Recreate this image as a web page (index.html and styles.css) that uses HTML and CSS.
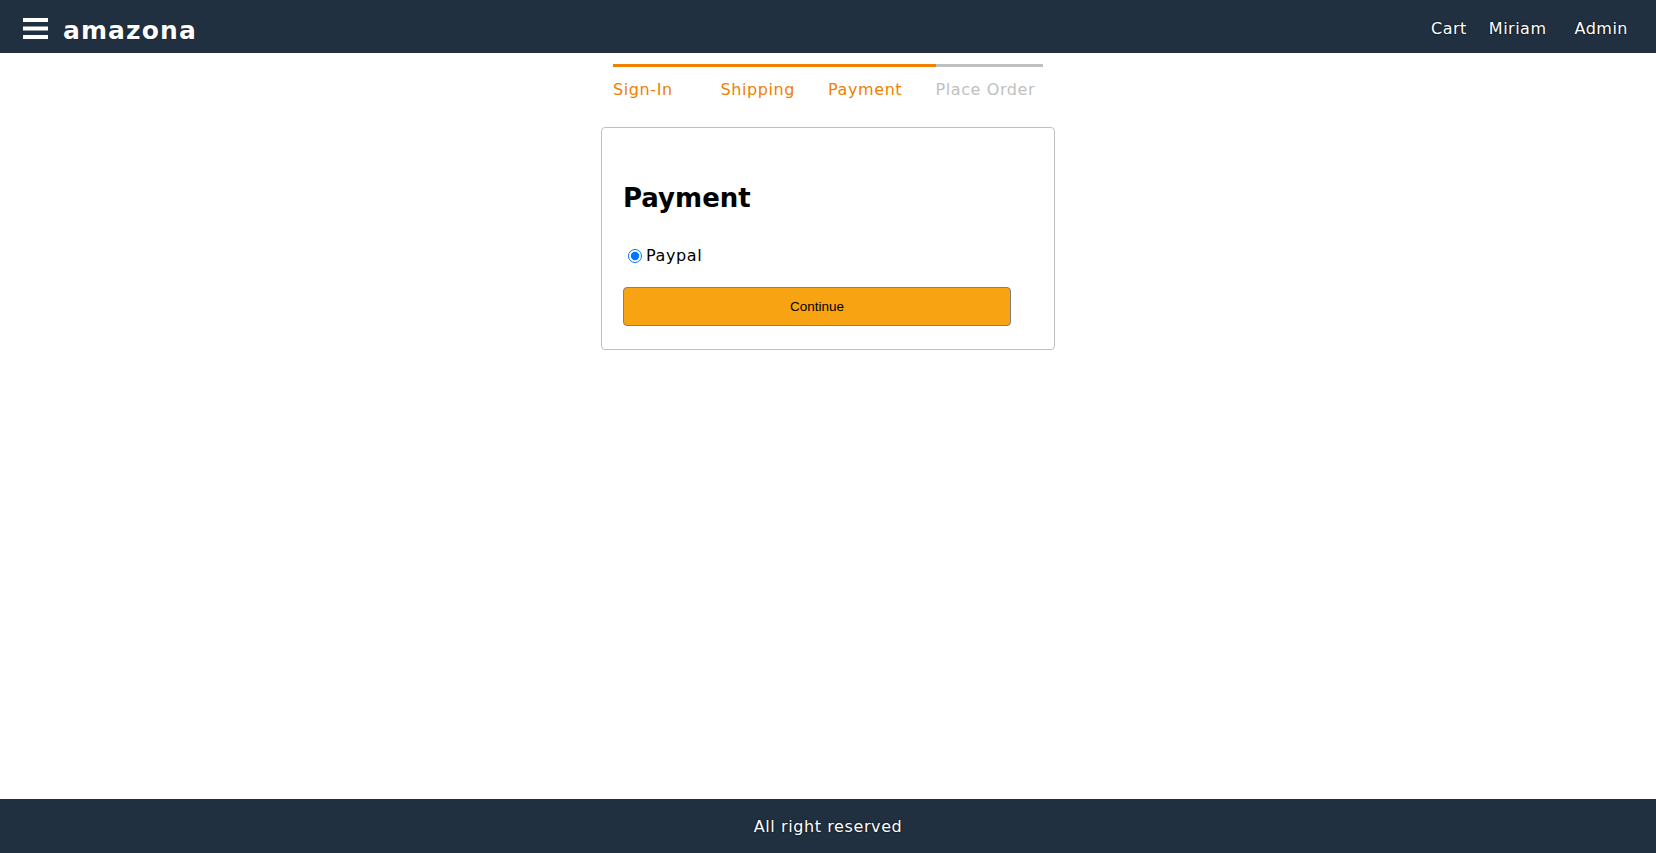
FILE: index.html
```html
<!DOCTYPE html>
<html>
<head>
<meta charset="utf-8">
<link rel="stylesheet" href="styles.css">
</head>
<body>
<div class="page">
  <header class="topbar">
    <div class="brand">
      <button class="menu-btn" aria-label="menu">
        <svg width="25" height="21" viewBox="0 0 25 21"><rect x="0" y="0" width="25" height="4" fill="#fff"/><rect x="0" y="8.5" width="25" height="4" fill="#fff"/><rect x="0" y="17" width="25" height="4" fill="#fff"/></svg>
      </button>
      <a class="logo" href="#">amazona</a>
    </div>
    <nav class="nav">
      <a class="nav-link" href="#">Cart</a>
      <a class="nav-link" href="#">Miriam</a>
      <a class="nav-link nav-admin" href="#">Admin</a>
    </nav>
  </header>
  <main class="main">
    <div class="steps">
      <div class="step active">Sign-In</div>
      <div class="step active">Shipping</div>
      <div class="step active">Payment</div>
      <div class="step">Place Order</div>
    </div>
    <div class="card">
      <form class="form">
        <h1 class="title">Payment</h1>
        <label class="option"><input type="radio" name="pm" checked><span>Paypal</span></label>
        <button type="button" class="primary">Continue</button>
      </form>
    </div>
  </main>
  <footer class="footer">All right reserved</footer>
</div>
</body>
</html>
```
FILE: styles.css
```css
html, body {
  margin: 0;
  padding: 0;
  height: 100%;
}
body {
  font-family: "DejaVu Sans", Verdana, sans-serif;
  font-size: 16px;
  letter-spacing: 0.6px;
  color: #000;
  background: #fff;
}
.page {
  display: flex;
  flex-direction: column;
  min-height: 100vh;
}
.topbar {
  height: 53px;
  background: #203040;
  display: flex;
  align-items: center;
  justify-content: space-between;
  padding: 4px 28px 0 23px;
  box-sizing: border-box;
  flex-shrink: 0;
}
.brand {
  display: flex;
  align-items: center;
}
.menu-btn {
  background: none;
  border: 0;
  padding: 0;
  margin: 0 15px 0 0;
  display: flex;
  cursor: pointer;
}
.logo {
  color: #fff;
  text-decoration: none;
  font-weight: bold;
  font-size: 25px;
  letter-spacing: 1.1px;
  text-shadow: 0 0 1px #000;
  position: relative;
  top: 2px;
}
.nav {
  display: flex;
  align-items: center;
}
.nav-link {
  color: #fff;
  text-decoration: none;
  font-size: 16px;
  letter-spacing: 0.5px;
  text-shadow: 0 0 2px #000;
  margin-left: 22px;
}
.nav-admin {
  margin-left: 28px;
}
.main {
  flex: 1;
  display: flex;
  flex-direction: column;
  align-items: center;
}
.steps {
  display: flex;
  width: 430px;
  margin-top: 11px;
}
.step {
  flex: 1;
  border-top: 3px solid #c0c0c0;
  color: #c0c0c0;
  padding-top: 13px;
  font-size: 16px;
  line-height: 20px;
}
.step.active {
  border-top-color: #f08000;
  color: #f08000;
}
.card {
  margin-top: 27px;
  width: 454px;
  box-sizing: border-box;
  border: 1px solid #c0c0c0;
  border-radius: 4px;
  padding: 0 43px 23px 21px;
}
.form {
  display: flex;
  flex-direction: column;
}
.title {
  font-size: 26px;
  letter-spacing: 0;
  margin: 54px 0 0 0;
  line-height: 32px;
}
.option {
  display: flex;
  align-items: center;
  margin-top: 32px;
  font-size: 16px;
  line-height: 20px;
}
.option input {
  margin: 0 4px 0 5px;
  width: 14px;
  height: 14px;
}
.primary {
  margin-top: 21px;
  height: 39px;
  width: 100%;
  background: #f8a412;
  border: 1px solid #808080;
  border-radius: 4px;
  font-family: "Liberation Sans", Arial, sans-serif;
  font-size: 13.5px;
  letter-spacing: 0;
  color: #000;
}
.footer {
  height: 54px;
  background: #203040;
  color: #fff;
  display: flex;
  align-items: center;
  justify-content: center;
  font-size: 16px;
  text-shadow: 0 0 2px #000;
  flex-shrink: 0;
}
```
